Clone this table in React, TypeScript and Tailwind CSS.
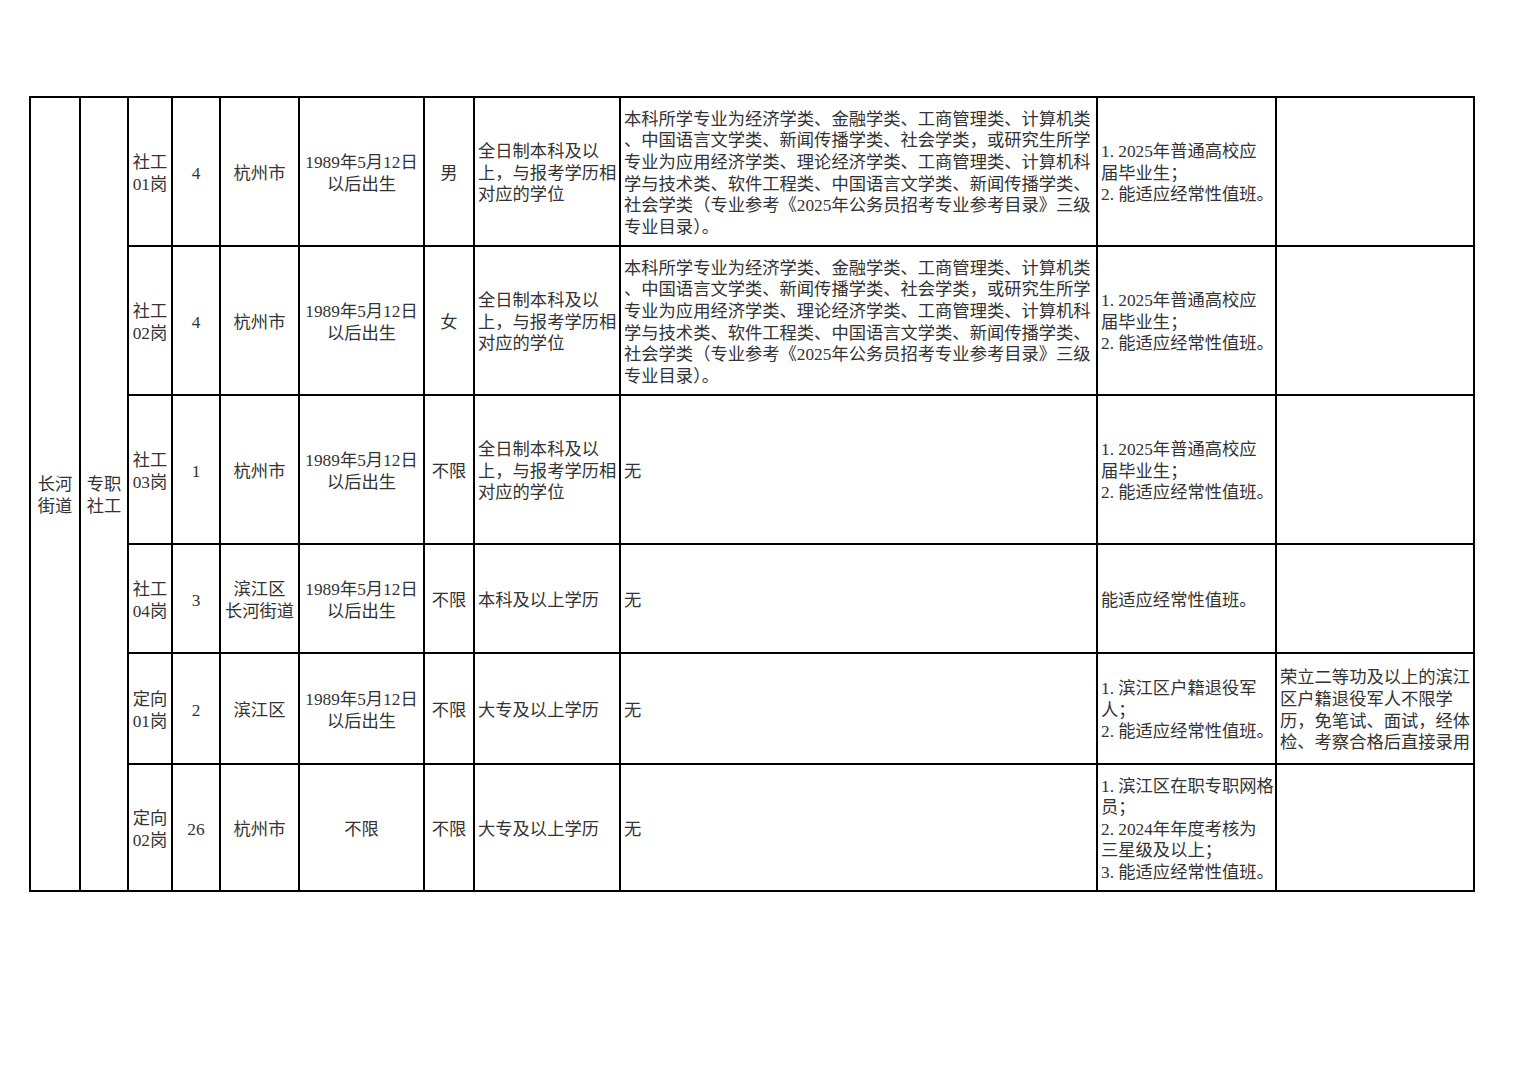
interface Post {
  id: string
  name: string[]
  count: string
  place: string[]
  birth: string[]
  gender: string
  education: string[]
  major: string[]
  other: string[]
  note: string[]
  height: string
}

const majorLines = [
  "本科所学专业为经济学类、金融学类、工商管理类、计算机类",
  "、中国语言文学类、新闻传播学类、社会学类，或研究生所学",
  "专业为应用经济学类、理论经济学类、工商管理类、计算机科",
  "学与技术类、软件工程类、中国语言文学类、新闻传播学类、",
  "社会学类（专业参考《2025年公务员招考专业参考目录》三级",
  "专业目录）。"
]

const fullTime = ["全日制本科及以", "上，与报考学历相", "对应的学位"]
const born = ["1989年5月12日", "以后出生"]
const graduate = ["1. 2025年普通高校应", "届毕业生；", "2. 能适应经常性值班。"]

const posts: Post[] = [
  {
    id: "1",
    name: ["社工", "01岗"],
    count: "4",
    place: ["杭州市"],
    birth: born,
    gender: "男",
    education: fullTime,
    major: majorLines,
    other: graduate,
    note: [],
    height: "h-[149px]"
  },
  {
    id: "2",
    name: ["社工", "02岗"],
    count: "4",
    place: ["杭州市"],
    birth: born,
    gender: "女",
    education: fullTime,
    major: majorLines,
    other: graduate,
    note: [],
    height: "h-[149px]"
  },
  {
    id: "3",
    name: ["社工", "03岗"],
    count: "1",
    place: ["杭州市"],
    birth: born,
    gender: "不限",
    education: fullTime,
    major: ["无"],
    other: graduate,
    note: [],
    height: "h-[149px]"
  },
  {
    id: "4",
    name: ["社工", "04岗"],
    count: "3",
    place: ["滨江区", "长河街道"],
    birth: born,
    gender: "不限",
    education: ["本科及以上学历"],
    major: ["无"],
    other: ["能适应经常性值班。"],
    note: [],
    height: "h-[109px]"
  },
  {
    id: "5",
    name: ["定向", "01岗"],
    count: "2",
    place: ["滨江区"],
    birth: born,
    gender: "不限",
    education: ["大专及以上学历"],
    major: ["无"],
    other: ["1. 滨江区户籍退役军", "人；", "2. 能适应经常性值班。"],
    note: ["荣立二等功及以上的滨江", "区户籍退役军人不限学", "历，免笔试、面试，经体", "检、考察合格后直接录用"],
    height: "h-[111px]"
  },
  {
    id: "6",
    name: ["定向", "02岗"],
    count: "26",
    place: ["杭州市"],
    birth: ["不限"],
    gender: "不限",
    education: ["大专及以上学历"],
    major: ["无"],
    other: ["1. 滨江区在职专职网格", "员；", "2. 2024年年度考核为", "三星级及以上；", "3. 能适应经常性值班。"],
    note: [],
    height: "h-[127px]"
  }
]

function Lines({ lines }: { lines: string[] }) {
  return (
    <>
      {lines.map((line, i) => (
        <div key={i} className="whitespace-nowrap">
          {line}
        </div>
      ))}
    </>
  )
}

const cell = "border-2 border-black align-middle p-0 pt-[4px]"
const center = `${cell} text-center`
const left = `${cell} text-left pl-[3px]`

export default function App() {
  return (
    <div
      className="min-h-[1080px] w-[1527px] bg-white pt-[96px] pl-[29px] text-[17.3px] leading-[21.6px] text-[#333]"
      style={{ fontFamily: '"Liberation Serif", "Noto Sans CJK SC", serif' }}
    >
      <table className="table-fixed border-collapse w-[1444px]">
        <colgroup>
          <col className="w-[50px]" />
          <col className="w-[48px]" />
          <col className="w-[44px]" />
          <col className="w-[48px]" />
          <col className="w-[79px]" />
          <col className="w-[125px]" />
          <col className="w-[50px]" />
          <col className="w-[146px]" />
          <col className="w-[477px]" />
          <col className="w-[179px]" />
          <col className="w-[198px]" />
        </colgroup>
        <tbody>
          {posts.map((post, index) => (
            <tr key={post.id} className={post.height}>
              {index === 0 && (
                <>
                  <td rowSpan={6} className={center}>
                    <Lines lines={["长河", "街道"]} />
                  </td>
                  <td rowSpan={6} className={center}>
                    <Lines lines={["专职", "社工"]} />
                  </td>
                </>
              )}
              <td className={center}>
                <Lines lines={post.name} />
              </td>
              <td className={center}>{post.count}</td>
              <td className={center}>
                <Lines lines={post.place} />
              </td>
              <td className={center}>
                <Lines lines={post.birth} />
              </td>
              <td className={center}>{post.gender}</td>
              <td className={left}>
                <Lines lines={post.education} />
              </td>
              <td className={left}>
                <Lines lines={post.major} />
              </td>
              <td className={left}>
                <Lines lines={post.other} />
              </td>
              <td className={left}>
                <Lines lines={post.note} />
              </td>
            </tr>
          ))}
        </tbody>
      </table>
    </div>
  )
}
